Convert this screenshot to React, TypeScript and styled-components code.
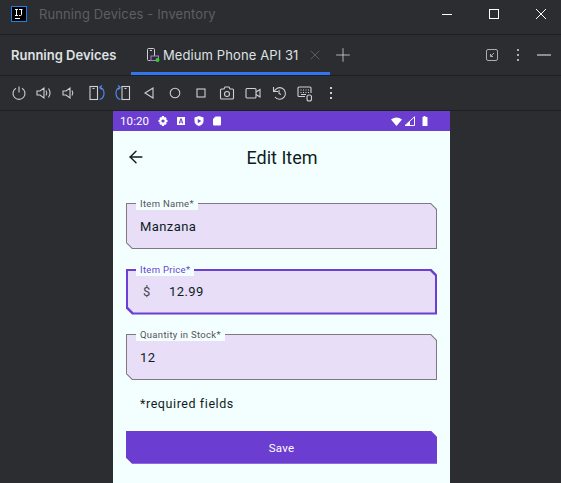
import React from 'react';
import styled, { createGlobalStyle } from 'styled-components';
import { ArrowLeft, Plus, X } from 'lucide-react';

const GlobalStyle = createGlobalStyle`
  html, body {
    margin: 0;
    padding: 0;
    background: #2b2d30;
    overflow: hidden;
  }
`;

const Window = styled.div`
  width: 561px;
  height: 483px;
  display: flex;
  flex-direction: column;
  overflow: hidden;
  background: #2b2d30;
  font-family: Inter, "Liberation Sans", sans-serif;
`;

const TitleBar = styled.header`
  height: 34px;
  flex: none;
  display: flex;
  align-items: center;
  padding-left: 11px;
  border-bottom: 1px solid #1e1f22;
`;

const AppLogo = styled.div`
  width: 16px;
  height: 16px;
  margin-top: -7px;
  flex: none;
`;

const WindowTitle = styled.span`
  margin-left: 12px;
  margin-top: -7px;
  font-size: 13px;
  letter-spacing: 0.11px;
  color: #5c5f65;
  white-space: nowrap;
`;

const WindowControls = styled.div`
  margin-left: auto;
  display: flex;
  margin-top: -7px;
  margin-right: -3.5px;
`;

const WindowButton = styled.div`
  width: 47px;
  height: 20px;
  display: flex;
  align-items: center;
  justify-content: center;
`;

const TabBar = styled.div`
  height: 40px;
  flex: none;
  display: flex;
  align-items: stretch;
  padding-left: 11px;
  border-bottom: 1px solid #1e1f22;
`;

const PanelName = styled.span`
  align-self: center;
  width: 120px;
  font-size: 13px;
  font-weight: 600;
  color: #dfe1e5;
  white-space: nowrap;
`;

const Tab = styled.div`
  width: 199px;
  display: flex;
  align-items: center;
  gap: 3px;
  padding: 0 7px 0 15px;
  box-sizing: border-box;
  border-bottom: 3px solid #3574f0;
`;

const TabIcon = styled.svg`
  flex: none;
  margin-top: 3px;
`;

const TabLabel = styled.span`
  font-size: 13px;
  letter-spacing: 0.1px;
  color: #dfe1e5;
  white-space: nowrap;
  margin-top: 3px;
`;

const TabClose = styled(X)`
  margin-left: auto;
  margin-top: 3px;
  color: #6f737a;
  flex: none;
`;

const AddTab = styled(Plus)`
  align-self: center;
  margin-left: 2px;
  color: #ced0d6;
  flex: none;
`;

const TabActions = styled.div`
  margin-left: auto;
  display: flex;
  align-items: center;
  gap: 17px;
  padding-right: 10px;
`;

const Toolbar = styled.div`
  height: 34px;
  flex: none;
  display: flex;
  align-items: center;
  padding-left: 11px;
  border-bottom: 1px solid #1e1f22;
`;

const ToolIcon = styled.svg<{ $gap?: number }>`
  width: 16px;
  height: 16px;
  flex: none;
  margin-right: ${(p) => p.$gap ?? 10}px;
  fill: none;
  stroke: #ced0d6;
  stroke-width: 1.1;
  overflow: visible;
`;

const Stage = styled.main`
  flex: 1;
  display: flex;
  padding-left: 113px;
  min-height: 0;
`;

const Phone = styled.section`
  width: 337px;
  display: flex;
  flex-direction: column;
  background: #f3fffe;
  font-family: Roboto, "Liberation Sans", sans-serif;
  color: #0f1d1f;
`;

const StatusBar = styled.div`
  height: 20px;
  flex: none;
  display: flex;
  align-items: center;
  padding: 0 21px 0 7px;
  background: #6b3dd1;
  color: #fff;
`;

const Clock = styled.span`
  width: 38px;
  font-size: 11.5px;
  letter-spacing: 0.1px;
`;

const StatusIcon = styled.svg`
  width: 10px;
  height: 10px;
  flex: none;
  fill: #fff;
  margin-right: 8px;
`;

const StatusRight = styled.div`
  margin-left: auto;
  display: flex;
  align-items: center;
  gap: 2px;
`;

const BatteryIcon = styled.svg`
  margin-left: 4px;
`;

const AppBar = styled.div`
  height: 53px;
  flex: none;
  position: relative;
  display: flex;
  align-items: center;
  justify-content: center;
  padding-left: 1px;
`;

const BackArrow = styled(ArrowLeft)`
  position: absolute;
  left: 13px;
  top: 16px;
  color: #0f1d1f;
`;

const ScreenTitle = styled.h1`
  margin: 0;
  font-size: 18px;
  font-weight: 400;
`;

const Form = styled.form`
  display: flex;
  flex-direction: column;
  gap: 19.5px;
  padding: 19px 13px 0;
`;

const Field = styled.div`
  position: relative;
  height: 46px;
`;

const Outline = styled.div<{ $focused?: boolean }>`
  height: 100%;
  box-sizing: border-box;
  padding: ${(p) => (p.$focused ? 2 : 1)}px;
  background: ${(p) => (p.$focused ? '#6b3fd4' : '#7d7882')};
  clip-path: polygon(0 0, calc(100% - 6px) 0, 100% 6px, 100% 100%, 6px 100%, 0 calc(100% - 6px));
`;

const FieldBody = styled.div`
  height: 100%;
  display: flex;
  align-items: center;
  padding-left: 13px;
  box-sizing: border-box;
  background: #e8def7;
  clip-path: polygon(0 0, calc(100% - 5.5px) 0, 100% 5.5px, 100% 100%, 5.5px 100%, 0 calc(100% - 5.5px));
  font-size: 13px;
  letter-spacing: 0.42px;
`;

const Prefix = styled.span`
  width: 26px;
  margin-left: 2px;
  color: #49454f;
`;

const FloatingLabel = styled.label<{ $focused?: boolean }>`
  position: absolute;
  left: 10px;
  top: -4px;
  height: 11px;
  padding: 0 4px;
  background: #f3fffe;
  font-size: 9.5px;
  line-height: 10px;
  letter-spacing: 0.3px;
  white-space: nowrap;
  color: ${(p) => (p.$focused ? '#6b3fd4' : '#56525c')};
`;

const Helper = styled.p`
  margin: 15.5px 0 0 27px;
  font-size: 12.5px;
  line-height: 16px;
  letter-spacing: 0.58px;
`;

const SaveButton = styled.button`
  height: 33px;
  margin: 19.3px 13px 0;
  padding: 1px 0 0;
  flex: none;
  border: 0;
  background: #6b3dd1;
  color: #fff;
  font-family: inherit;
  font-size: 11.5px;
  font-weight: 400;
  letter-spacing: 0.2px;
  clip-path: polygon(0 0, calc(100% - 6px) 0, 100% 6px, 100% 100%, 6px 100%, 0 calc(100% - 6px));
`;

const App: React.FC = () => (
  <>
    <GlobalStyle />
    <Window>
      <TitleBar>
        <AppLogo>
          <svg width="16" height="16" viewBox="0 0 16 16">
            <rect x="0.5" y="0.5" width="15" height="15" fill="#000" stroke="#1f7fe6" />
            <path d="M4 3.500h3M5.500 3.500v6M4 9.500h3M8 3.500h3.500M10.500 3.500v5q0 1-1 1H8M4 12.500h5" fill="none" stroke="#fff" />
          </svg>
        </AppLogo>
        <WindowTitle>Running Devices - Inventory</WindowTitle>
        <WindowControls>
          <WindowButton>
            <svg width="10" height="10" viewBox="0 0 10 10"><path d="M0 5.500h10" stroke="#fff" /></svg>
          </WindowButton>
          <WindowButton>
            <svg width="10" height="10" viewBox="0 0 10 10"><rect x=".5" y=".5" width="9" height="9" fill="none" stroke="#fff" /></svg>
          </WindowButton>
          <WindowButton>
            <svg width="10" height="10" viewBox="0 0 10 10"><path d="M0 0l10 10M10 0L0 10" stroke="#fff" /></svg>
          </WindowButton>
        </WindowControls>
      </TitleBar>

      <TabBar>
        <PanelName>Running Devices</PanelName>
        <Tab>
          <TabIcon width="14" height="14" viewBox="0 0 14 14">
            <path d="M8.500 8V1.500q0-1-1-1h-5q-1 0-1 1v10q0 1 1 1h2" fill="none" stroke="#ced0d6" />
            <path d="M4 2.500h2" stroke="#ced0d6" />
            <rect x="5" y="8" width="7.500" height="4.500" fill="none" stroke="#a77fe0" />
            <circle cx="11.500" cy="12" r="2" fill="#2fd02f" />
          </TabIcon>
          <TabLabel>Medium Phone API 31</TabLabel>
          <TabClose size={16} strokeWidth={1} />
        </Tab>
        <AddTab size={22} strokeWidth={0.9} />
        <TabActions>
          <svg width="14" height="14" viewBox="0 0 14 14">
            <rect x="1.500" y="1.500" width="11" height="11" rx="1.500" fill="none" stroke="#a8adb3" />
            <path d="M9 5L5.500 8.500M5.500 6v2.500H8" fill="none" stroke="#a8adb3" />
          </svg>
          <svg width="4" height="14" viewBox="0 0 4 14">
            <path d="M1 1h2v2H1zM1 6h2v2H1zM1 11h2v2H1z" fill="#a8adb3" />
          </svg>
          <svg width="14" height="4" viewBox="0 0 14 4">
            <path d="M0 1h14v2H0z" fill="#8a8d92" />
          </svg>
        </TabActions>
      </TabBar>

      <Toolbar>
        <ToolIcon viewBox="0 0 16 16" $gap={9}>
          <path d="M8 1.500v6M5 3.200a6 6 0 1 0 6 0" />
        </ToolIcon>
        <ToolIcon viewBox="0 0 16 16" $gap={9}>
          <path d="M1 6v4h3l4 3V3L4 6zM10 5.500q1.600 2.500 0 5M12.500 3.500q3 4.500 0 9" />
        </ToolIcon>
        <ToolIcon viewBox="0 0 16 16" $gap={12}>
          <path d="M2 6v4h3l4 3V3L5 6zM11 5.500q1.600 2.500 0 5" />
        </ToolIcon>
        <ToolIcon viewBox="0 0 16 16" $gap={9}>
          <rect x="1" y="1.500" width="7.500" height="13" />
          <path d="M3.500 3.500h2" />
          <path d="M10.500 2.500q4.500.5 4.500 5.800t-4.500 6.200M10.500 2.500l2.500-2M10.500 2.500l2.500 2" stroke="#548af7" />
        </ToolIcon>
        <ToolIcon viewBox="0 0 16 16" $gap={11}>
          <rect x="8" y="1.500" width="7.500" height="13" />
          <path d="M10.500 3.500h2" />
          <path d="M6.500 2.500q-4.500.5-4.500 5.800t4.500 6.200M6.500 2.500l-2.500-2M6.500 2.500l-2.500 2" stroke="#548af7" />
        </ToolIcon>
        <ToolIcon viewBox="0 0 16 16">
          <path d="M12 3v10L4 8z" />
        </ToolIcon>
        <ToolIcon viewBox="0 0 16 16">
          <circle cx="8" cy="8" r="4.800" />
        </ToolIcon>
        <ToolIcon viewBox="0 0 16 16">
          <rect x="4" y="4" width="8" height="8" />
        </ToolIcon>
        <ToolIcon viewBox="0 0 16 16">
          <path d="M2.500 4q-1 0-1 1v8q0 1 1 1h11q1 0 1-1V5q0-1-1-1h-2.500L10 2H6L5 4z" />
          <circle cx="8" cy="9" r="2.500" />
        </ToolIcon>
        <ToolIcon viewBox="0 0 16 16">
          <rect x="1" y="3.500" width="10" height="9.500" rx="1" />
          <path d="M11 7l4-2.500v7.500L11 9.500" />
        </ToolIcon>
        <ToolIcon viewBox="0 0 16 16">
          <path d="M3 7a5.800 5.800 0 1 1 1 5M2.500 2v4.500H7M8 5v3.500l2 1" />
        </ToolIcon>
        <ToolIcon viewBox="0 0 16 16" $gap={16}>
          <path d="M8 11.500H2q-1 0-1-1V3q0-1 1-1h11q1 0 1 1v5" />
          <path d="M3.500 5h1M6 5h1M8.500 5h1M11 5h1M3.500 7.500h1M6 7.500h1M8.500 7.500h1M11 7.500h1M4 9.500h5" />
          <rect x="10" y="10" width="4.500" height="6" rx="2" />
        </ToolIcon>
        <svg width="4" height="14" viewBox="0 0 4 14">
          <path d="M1 1h2v2H1zM1 6h2v2H1zM1 11h2v2H1z" fill="#ced0d6" />
        </svg>
      </Toolbar>

      <Stage>
        <Phone>
          <StatusBar>
            <Clock>10:20</Clock>
            <StatusIcon viewBox="0 0 10 10">
              <path fillRule="evenodd" d="M4 0h2l.3 1.500 1-.5L8.700 2.400l-.7 1 1.500.6v2l-1.500.5.700 1L7.300 9l-1-.6L6 10H4l-.3-1.600-1 .6L1.300 7.600l.7-1L.5 6V4L2 3.400l-.7-1L2.700 1l1 .5zM5 3.400a1.600 1.600 0 1 0 0 3.200 1.600 1.600 0 0 0 0-3.200z" />
            </StatusIcon>
            <StatusIcon viewBox="0 0 10 10">
              <path fillRule="evenodd" d="M1 1h8v8H1zM4.300 2.500L2.800 7.500h1l.3-1h1.800l.3 1h1L5.700 2.500zM5 3.800l.6 1.900H4.400z" />
            </StatusIcon>
            <StatusIcon viewBox="0 0 10 10">
              <path fillRule="evenodd" d="M5 0l4.500 1.500v3.500Q9.500 8.500 5 10 .5 8.500.5 5V1.500zM3.800 3v4.200L7.300 5z" />
            </StatusIcon>
            <StatusIcon viewBox="0 0 10 10">
              <path d="M3.500 0.500H8q1 0 1 1v7q0 1-1 1H2q-1 0-1-1V3z" />
            </StatusIcon>
            <StatusRight>
              <svg width="11" height="9" viewBox="0 0 11 9"><path d="M0 2.500Q5.500-1.500 11 2.500L5.500 9z" fill="#fff" /></svg>
              <svg width="11" height="10" viewBox="0 0 11 10">
                <path d="M10.500.8v8.700H1z" fill="#6b3dd1" stroke="#fff" strokeWidth="1" />
                <path d="M6 5v5H1z" fill="#fff" />
              </svg>
              <BatteryIcon width="8" height="10" viewBox="0 0 8 10"><path d="M2.500 0h2v1H6.500v9h-5V1h1z" fill="#fff" /></BatteryIcon>
            </StatusRight>
          </StatusBar>

          <AppBar>
            <BackArrow size={20} strokeWidth={1.7} />
            <ScreenTitle>Edit Item</ScreenTitle>
          </AppBar>

          <Form>
            <Field>
              <Outline><FieldBody>Manzana</FieldBody></Outline>
              <FloatingLabel>Item Name*</FloatingLabel>
            </Field>
            <Field>
              <Outline $focused><FieldBody><Prefix>$</Prefix>12.99</FieldBody></Outline>
              <FloatingLabel $focused>Item Price*</FloatingLabel>
            </Field>
            <Field>
              <Outline><FieldBody>12</FieldBody></Outline>
              <FloatingLabel>Quantity in Stock*</FloatingLabel>
            </Field>
          </Form>

          <Helper>*required fields</Helper>
          <SaveButton type="button">Save</SaveButton>
        </Phone>
      </Stage>
    </Window>
  </>
);

export default App;
